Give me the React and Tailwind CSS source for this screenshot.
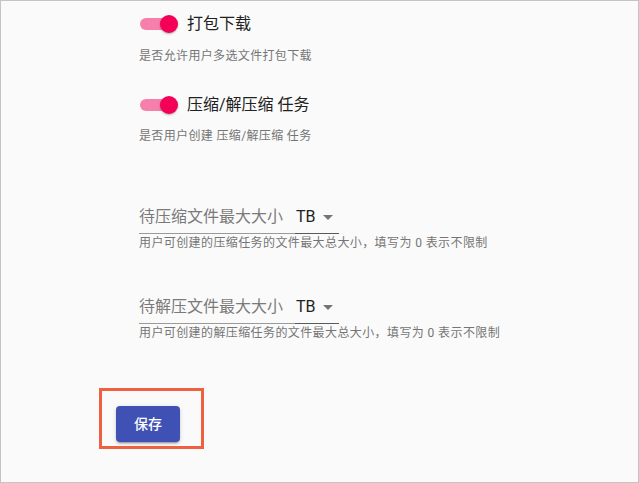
import React from "react";

const font = { fontFamily: 'Roboto, "Noto Sans CJK SC", sans-serif' };

function Switch() {
  return (
    <div className="relative w-[40px] h-[20px] flex items-center">
      <div className="absolute left-0 top-[4px] w-[34px] h-[12px] rounded-full bg-[#f77fab]" />
      <div className="absolute left-[20px] top-[1px] w-[18px] h-[18px] rounded-full bg-[#f50057] shadow-[0_1px_2px_rgba(0,0,0,0.3)]" />
    </div>
  );
}

function SwitchRow({ title, desc, first }) {
  return (
    <div className={first ? "mt-[14px]" : "mt-[31px]"}>
      <div className="flex items-center h-[20px] pl-[1px]">
        <Switch />
        <span className="ml-[7px] text-[16px] leading-[20px] text-[#212121]">{title}</span>
      </div>
      <div className={(first ? "mt-[14px]" : "mt-[13px]") + " text-[12px] leading-[16px] tracking-[0.35px] text-[#757575]"}>{desc}</div>
    </div>
  );
}

function SizeField({ label, helper, mt }) {
  return (
    <div className={mt}>
      <div className="flex items-end">
        <div className="w-[156px] h-[29px] border-b border-[#9a9a9a] pb-[4px] text-[16px] leading-[24px] text-[#7a7a7a]">
          {label}
        </div>
        <div className="w-[44px] h-[29px] border-b border-[#5a5a5a] pb-[4px] flex items-center">
          <span className="ml-[1px] text-[16px] leading-[24px] text-[#222]">TB</span>
          <svg width="10" height="5" viewBox="0 0 10 5" className="ml-[7px] mt-[1px]">
            <path d="M0 0 L10 0 L5 5 Z" fill="#757575" />
          </svg>
        </div>
      </div>
      <div className="mt-[2px] text-[12px] leading-[14px] tracking-[0.4px] text-[#757575]">{helper}</div>
    </div>
  );
}

export default function App() {
  return (
    <div style={font} className="w-[639px] h-[483px] bg-[#fafafa] border border-[#c4c4c4] overflow-hidden">
      <div className="pl-[138px] flex flex-col -mt-px">
        <SwitchRow first title="打包下载" desc="是否允许用户多选文件打包下载" />
        <SwitchRow title="压缩/解压缩 任务" desc="是否用户创建 压缩/解压缩 任务" />
        <SizeField
          mt="mt-[61px]"
          label="待压缩文件最大大小"
          helper="用户可创建的压缩任务的文件最大总大小，填写为 0 表示不限制"
        />
        <SizeField
          mt="mt-[45px]"
          label="待解压文件最大大小"
          helper="用户可创建的解压缩任务的文件最大总大小，填写为 0 表示不限制"
        />
        <div className="mt-[66px] ml-[-23px] relative w-[64px]">
          <button className="w-[64px] h-[36px] rounded-[4px] bg-[#3f51b5] text-white text-[14px] font-medium shadow-[0_3px_1px_-2px_rgba(0,0,0,0.2),0_2px_2px_0_rgba(0,0,0,0.14),0_1px_5px_0_rgba(0,0,0,0.12)]">
            保存
          </button>
          <span className="absolute left-[-17px] top-[-18px] w-[105px] h-[61px] border-[3px] border-[#ee6040] pointer-events-none" />
        </div>
      </div>
    </div>
  );
}
